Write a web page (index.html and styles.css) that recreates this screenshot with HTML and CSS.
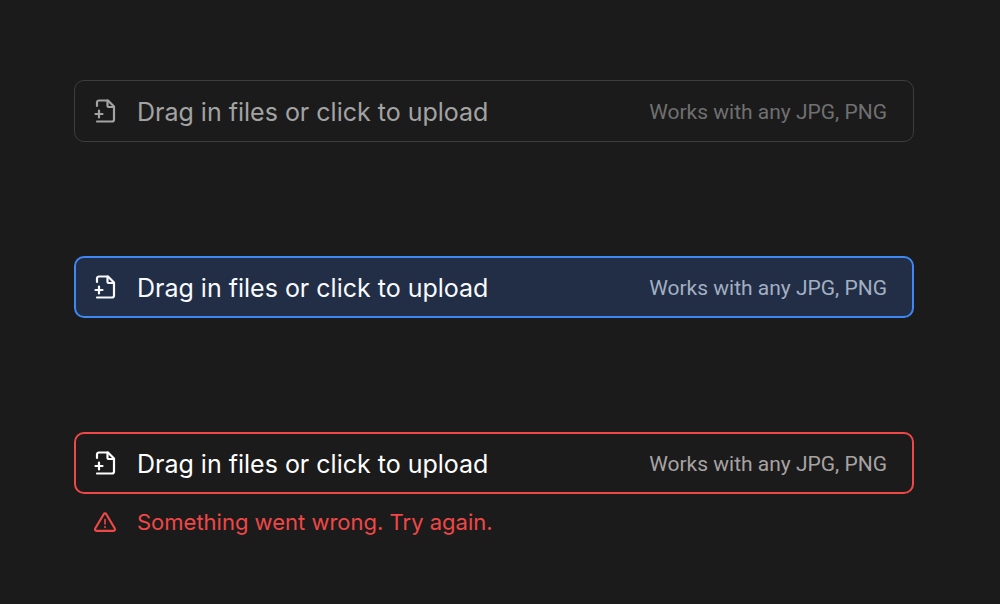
FILE: index.html
```html
<!DOCTYPE html>
<html lang="en">
<head>
  <meta charset="UTF-8" />
  <title>File Upload States</title>
  <meta name="viewport" content="width=device-width, initial-scale=1.0" />
  <link rel="stylesheet" href="styles.css">
</head>
<body>

<main class="container">
  <!-- default -->
  <button type="button" class="upload">
    <svg class="icon" viewBox="0 0 24 24" aria-hidden="true">
      <path d="M4 7V3.5a2 2 0 0 1 2-2h9l6 6v13a2 2 0 0 1-2 2H4" />
      <path d="M14.5 1.5v5.5a1 1 0 0 0 1 1H21" />
      <path d="M2.5 15h7M6 11.5v7" />
    </svg>
    <span class="title">Drag in files or click to upload</span>
    <span class="hint">Works with any JPG, PNG</span>
  </button>

  <!-- drag over -->
  <button type="button" class="upload active">
    <svg class="icon" viewBox="0 0 24 24" aria-hidden="true">
      <path d="M4 7V3.5a2 2 0 0 1 2-2h9l6 6v13a2 2 0 0 1-2 2H4" />
      <path d="M14.5 1.5v5.5a1 1 0 0 0 1 1H21" />
      <path d="M2.5 15h7M6 11.5v7" />
    </svg>
    <span class="title">Drag in files or click to upload</span>
    <span class="hint">Works with any JPG, PNG</span>
  </button>

  <!-- error -->
  <div class="field">
    <button type="button" class="upload error" aria-describedby="uploadError">
      <svg class="icon" viewBox="0 0 24 24" aria-hidden="true">
        <path d="M4 7V3.5a2 2 0 0 1 2-2h9l6 6v13a2 2 0 0 1-2 2H4" />
        <path d="M14.5 1.5v5.5a1 1 0 0 0 1 1H21" />
        <path d="M2.5 15h7M6 11.5v7" />
      </svg>
      <span class="title">Drag in files or click to upload</span>
      <span class="hint">Works with any JPG, PNG</span>
    </button>
    <div class="message" id="uploadError">
      <svg class="icon" viewBox="0 0 24 24" aria-hidden="true">
        <path d="M10.7 4.2 2.2 18.5a1.5 1.5 0 0 0 1.3 2.3h17a1.5 1.5 0 0 0 1.3-2.3L13.3 4.2a1.5 1.5 0 0 0-2.6 0z" />
        <path class="mark" d="M12 9.5v4.5M12 16.5v1" />
      </svg>
      <span>Something went wrong. Try again.</span>
    </div>
  </div>
</main>

</body>
</html>
```

FILE: styles.css
```css
* {
  box-sizing: border-box;
}
body {
  margin: 0;
  background: #1b1b1b;
  color: white;
  font-family: Inter, sans-serif;
}
.container {
  display: flex;
  flex-direction: column;
  gap: 114px;
  padding: 80px 86px 64px 74px;
}
.upload {
  display: flex;
  align-items: center;
  width: 100%;
  padding: 15px 26px 13px 18px;
  background: transparent;
  color: #a3a3a3;
  border: 1px solid #3d3d3d;
  border-radius: 10px;
  font-family: inherit;
  text-align: left;
  cursor: pointer;
}
.icon {
  flex: none;
  width: 24px;
  height: 24px;
  margin-right: 20px;
  fill: none;
  stroke: currentColor;
  stroke-width: 2.2;
  stroke-linecap: round;
  stroke-linejoin: round;
}
.upload .icon {
  margin-bottom: 2px;
}
.title {
  flex: 1;
  font-size: 25px;
  line-height: 32px;
}
.hint {
  color: #707070;
  font-family: Roboto, sans-serif;
  font-size: 21px;
  line-height: 32px;
}
.active {
  background: #212e45;
  border: 2px solid #3f87f5;
  color: #f8faff;
}
.active .hint {
  color: #a3afc2;
}
.error {
  border: 2px solid #f04747;
  color: white;
}
.error .hint {
  color: #a8a3a3;
}
.upload.active, .upload.error {
  padding: 14px 25px 12px 17px;
}
.message {
  display: flex;
  align-items: center;
  margin-top: 12px;
  padding-left: 19px;
  color: #f04747;
  font-size: 22px;
  line-height: 32px;
}
.mark {
  stroke-width: 1.6;
}
```
